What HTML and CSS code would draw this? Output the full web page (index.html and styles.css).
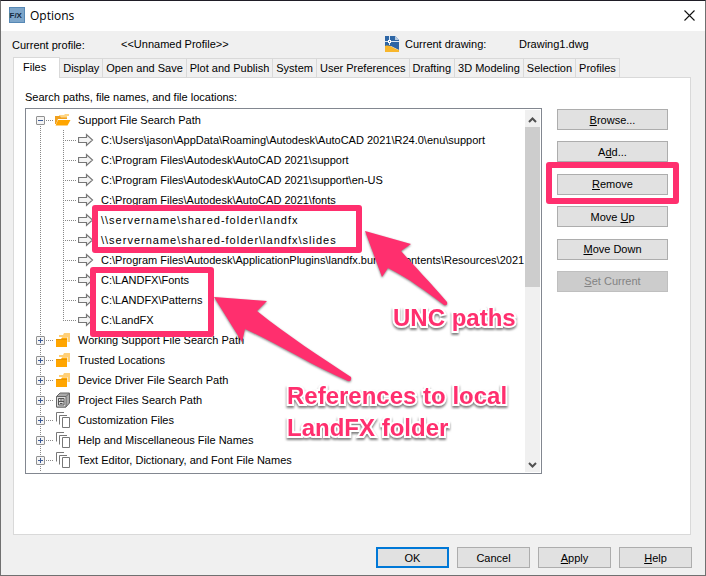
FILE: index.html
```
<!DOCTYPE html>
<html lang="en">
<head>
  <meta charset="UTF-8" />
  <meta name="viewport" content="width=device-width, initial-scale=1" />
  <title>Options</title>
  <link rel="stylesheet" href="styles.css">
</head>
<body>

  <!-- shared icons -->
  <svg class="sprite" aria-hidden="true">
    <symbol id="arrow" viewBox="0 0 16 14">
      <path d="M0.500 4.500H8.500V1.500L14.500 7L8.500 12.500V9.500H0.500Z" fill="#f4f4f4" stroke="#777" stroke-width="1.200"/>
    </symbol>
    <symbol id="folder-open" viewBox="0 0 16 14">
      <path d="M4 2H9L10 1H14V3H12V5H4Z" fill="#ffd684"/>
      <path d="M0 3H5L6 4.500H12V6H3L1 11H0Z" fill="#f0a01e"/>
      <path d="M3 7H15.500L12.500 12.500H0.500Z" fill="#ffa500"/>
    </symbol>
    <symbol id="folders" viewBox="0 0 16 16">
      <path d="M4 3H8L9 1H15V10H12.500V5H4Z" fill="#ffcf76"/>
      <path d="M1 7H6L7 5.500H12V15H1Z" fill="#ffa500"/>
      <path d="M1 7.500H12" stroke="#e59400" stroke-width="1"/>
    </symbol>
    <symbol id="cabinet" viewBox="0 0 16 16">
      <path d="M1.500 4.500L5 1H14.500V11L11 15H1.500Z" fill="#aaa" stroke="#666"/>
      <path d="M1.500 4.500H11V15H1.500ZM11 4.500L14.500 1" fill="#ddd" stroke="#666"/>
      <path d="M3.500 6.500H9V13H3.500ZM3.500 9.500H9M5 8H7.500M5 11.500H7.500" fill="none" stroke="#555"/>
    </symbol>
    <symbol id="files" viewBox="0 0 16 16">
      <path d="M1.500 9.500V0.500H9M4.500 12.500V3.500H12" fill="none" stroke="#777"/>
      <path d="M7.500 5.500H14.500V15.500H7.500Z" fill="#fff" stroke="#777"/>
    </symbol>
  </svg>

  <div class="dialog">
    <header class="titlebar">
      <svg class="app-icon" viewBox="0 0 16 16">
        <rect width="16" height="16" fill="#5688b5"/>
        <rect x="1" y="1" width="14" height="14" fill="#7da5c9"/>
        <text x="0.500" y="11" class="app-icon-text">F/X</text>
      </svg>
      <h1>Options</h1>
      <button class="close" aria-label="Close">
        <svg viewBox="0 0 11 11"><path d="M0.500 0.500L10.500 10.500M10.500 0.500L0.500 10.500" stroke="#111" stroke-width="1.100"/></svg>
      </button>
    </header>

    <div class="info">
      <span class="profile-label">Current profile:</span>
      <span class="profile">&lt;&lt;Unnamed Profile&gt;&gt;</span>
      <svg class="dwg-icon" viewBox="0 0 14 16">
        <path d="M0 0H10L14 4V14L6 10H0Z" fill="#2e66a5"/>
        <path d="M10 0V4H14Z" fill="#b5c9df"/>
        <path d="M0 10C5 8 9 13 14 14V16H0Z" fill="#f8b62c"/>
        <path d="M0 5.500H14M4.500 0V9" stroke="#dce8f4"/>
        <rect x="3.500" y="4.500" width="2" height="2" fill="#2e66a5" stroke="#fff"/>
      </svg>
      <span class="drawing-label">Current drawing:</span>
      <span>Drawing1.dwg</span>
    </div>

    <nav class="tabs" role="tablist">
      <button class="tab active" role="tab" aria-selected="true">Files</button>
      <button class="tab" role="tab">Display</button>
      <button class="tab" role="tab">Open and Save</button>
      <button class="tab" role="tab">Plot and Publish</button>
      <button class="tab" role="tab">System</button>
      <button class="tab" role="tab">User Preferences</button>
      <button class="tab" role="tab">Drafting</button>
      <button class="tab" role="tab">3D Modeling</button>
      <button class="tab" role="tab">Selection</button>
      <button class="tab" role="tab">Profiles</button>
    </nav>

    <main class="panel">
      <p class="caption">Search paths, file names, and file locations:</p>
      <div class="columns">
        <div class="tree-box">
          <ul class="tree">
            <li>
              <div class="row"><button class="toggle open" aria-label="Collapse"></button><svg class="icon"><use href="#folder-open"/></svg>Support File Search Path</div>
              <ul class="paths">
                <li><svg class="icon"><use href="#arrow"/></svg>C:\Users\jason\AppData\Roaming\Autodesk\AutoCAD 2021\R24.0\enu\support</li>
                <li><svg class="icon"><use href="#arrow"/></svg>C:\Program Files\Autodesk\AutoCAD 2021\support</li>
                <li><svg class="icon"><use href="#arrow"/></svg>C:\Program Files\Autodesk\AutoCAD 2021\support\en-US</li>
                <li><svg class="icon"><use href="#arrow"/></svg>C:\Program Files\Autodesk\AutoCAD 2021\fonts</li>
                <li class="unc"><svg class="icon"><use href="#arrow"/></svg>\\servername\shared-folder\landfx</li>
                <li class="unc"><svg class="icon"><use href="#arrow"/></svg>\\servername\shared-folder\landfx\slides</li>
                <li><svg class="icon"><use href="#arrow"/></svg>C:\Program Files\Autodesk\ApplicationPlugins\landfx.bundle\Contents\Resources\2021</li>
                <li><svg class="icon"><use href="#arrow"/></svg>C:\LANDFX\Fonts</li>
                <li><svg class="icon"><use href="#arrow"/></svg>C:\LANDFX\Patterns</li>
                <li><svg class="icon"><use href="#arrow"/></svg>C:\LandFX</li>
              </ul>
            </li>
            <li class="row"><button class="toggle" aria-label="Expand"></button><svg class="icon"><use href="#folders"/></svg>Working Support File Search Path</li>
            <li class="row"><button class="toggle" aria-label="Expand"></button><svg class="icon"><use href="#folders"/></svg>Trusted Locations</li>
            <li class="row"><button class="toggle" aria-label="Expand"></button><svg class="icon"><use href="#folders"/></svg>Device Driver File Search Path</li>
            <li class="row"><button class="toggle" aria-label="Expand"></button><svg class="icon"><use href="#cabinet"/></svg>Project Files Search Path</li>
            <li class="row"><button class="toggle" aria-label="Expand"></button><svg class="icon"><use href="#files"/></svg>Customization Files</li>
            <li class="row"><button class="toggle" aria-label="Expand"></button><svg class="icon"><use href="#files"/></svg>Help and Miscellaneous File Names</li>
            <li class="row"><button class="toggle" aria-label="Expand"></button><svg class="icon"><use href="#files"/></svg>Text Editor, Dictionary, and Font File Names</li>
          </ul>
          <div class="scrollbar">
            <button aria-label="Scroll up"><svg viewBox="0 0 9 6"><path d="M1 5L4.500 1.500L8 5" fill="none" stroke="#505050" stroke-width="2"/></svg></button>
            <div class="thumb"></div>
            <button class="down" aria-label="Scroll down"><svg viewBox="0 0 9 6"><path d="M1 1L4.500 4.500L8 1" fill="none" stroke="#505050" stroke-width="2"/></svg></button>
          </div>
        </div>
        <div class="actions">
          <button class="btn"><u>B</u>rowse...</button>
          <button class="btn">A<u>d</u>d...</button>
          <button class="btn"><u>R</u>emove</button>
          <button class="btn">Move <u>U</u>p</button>
          <button class="btn"><u>M</u>ove Down</button>
          <button class="btn" disabled><u>S</u>et Current</button>
        </div>
      </div>
    </main>

    <footer class="footer">
      <button class="btn primary">OK</button>
      <button class="btn">Cancel</button>
      <button class="btn"><u>A</u>pply</button>
      <button class="btn"><u>H</u>elp</button>
    </footer>

    <!-- callouts drawn over the dialog -->
    <div class="mark mark-unc"></div>
    <div class="mark mark-local"></div>
    <div class="mark mark-remove"></div>
    <svg class="pointers" viewBox="0 0 240 180">
      <path d="M152 11L198 24L188 31C203 48 217 62 234 82Q235 86 231 85C212 71 197 59 175 48L169 57Z"/>
      <path d="M1 77L54 81L44 91C75 116 108 137 138 157Q139 162 135 161C100 146 65 124 32 109L29 122Z"/>
    </svg>
    <p class="note note-unc">UNC paths</p>
    <p class="note note-local">References to local<br>LandFX folder</p>
  </div>

</body>
</html>
```
FILE: styles.css
```
* {
  box-sizing: border-box;
}

body {
  margin: 0;
  font-family: "Liberation Sans", Arial, sans-serif;
  font-size: 11px;
  line-height: 16px;
  color: #000;
}

ul {
  list-style: none;
  margin: 0;
  padding: 0;
}

p {
  margin: 0;
}

button {
  font: inherit;
  color: inherit;
  padding: 0;
}

.sprite {
  position: absolute;
  width: 0;
  height: 0;
}

.dialog {
  position: relative;
  min-height: 100vh;
  display: flex;
  flex-direction: column;
  background: #f0f0f0;
  border: 1px solid #707070;
  border-top-color: #1f1d26;
}

/* title bar */
.titlebar {
  display: flex;
  align-items: center;
  height: 30px;
  padding: 0 10px 2px 8px;
  background: #fff;
}

.app-icon {
  width: 16px;
  height: 16px;
}

.app-icon-text {
  font: bold 8px "Liberation Sans", sans-serif;
  fill: #14283c;
}

h1 {
  flex: 1;
  margin: 0 0 0 5px;
  padding-top: 2px;
  font: 12px/16px "Open Sans", sans-serif;
  color: #000;
}

.close {
  width: 11px;
  height: 11px;
  border: 0;
  background: none;
}

.close svg {
  display: block;
}

.info {
  display: flex;
  align-items: center;
  height: 26px;
  padding: 0 11px;
}

.profile-label {
  width: 109px;
  padding-top: 2px;
}

.profile {
  width: 264px;
}

.dwg-icon {
  width: 14px;
  height: 16px;
  margin-right: 6px;
}

.drawing-label {
  width: 114px;
}

/* tabs */
.tabs {
  display: flex;
  align-items: flex-end;
  padding: 0 12px;
}

.tab {
  height: 19px;
  padding: 0 3px;
  border: 1px solid #d9d9d9;
  border-width: 1px 1px 0 0;
  background: #f0f0f0;
}

.tab.active {
  height: 21px;
  padding: 0 13px 3px 9px;
  border-left-width: 1px;
  background: #fff;
  margin-bottom: -1px;
  z-index: 1;
}

.panel {
  flex: 1;
  margin: 0 14px 0 12px;
  padding: 11px 22px 0 11px;
  border: 1px solid #d9d9d9;
  background: #fff;
}

.caption {
  padding-bottom: 3px;
}

.columns {
  display: flex;
  align-items: flex-start;
  gap: 15px;
}

/* tree */
.tree-box {
  flex: 1;
  display: flex;
  min-width: 0;
  border: 1px solid #828790;
  padding: 1px;
}

.tree {
  flex: 1;
  min-width: 0;
  padding: 0 0 2px 9px;
  overflow: hidden;
  white-space: nowrap;
  background: repeating-linear-gradient(#888 0 1px, transparent 1px 2px) 13px 14px / 1px 100% no-repeat;
}

.row,
.paths li {
  display: flex;
  align-items: center;
  height: 20px;
}

.icon {
  flex: none;
  width: 16px;
  height: 14px;
  margin-right: 7px;
}

.row .icon {
  height: 16px;
}

.toggle {
  width: 9px;
  height: 9px;
  border: 1px solid #919191;
  border-radius: 1px;
  background:
    linear-gradient(#3c5a96, #3c5a96) center / 5px 1px no-repeat,
    linear-gradient(#3c5a96, #3c5a96) center / 1px 5px no-repeat,
    #f4f4f4;
}

.toggle.open {
  background:
    linear-gradient(#3c5a96, #3c5a96) center / 5px 1px no-repeat,
    #f4f4f4;
}

.row .toggle + .icon {
  margin-left: 10px;
}

.row {
  background: repeating-linear-gradient(90deg, #888 0 1px, transparent 1px 2px) 10px 10px / 8px 1px no-repeat;
}

.paths {
  margin-left: 27px;
  background: repeating-linear-gradient(#888 0 1px, transparent 1px 2px) 0 0 / 1px 190px no-repeat;
}

.paths li {
  padding-left: 15px;
  background: repeating-linear-gradient(90deg, #888 0 1px, transparent 1px 2px) 0 10px / 13px 1px no-repeat;
}

.paths .unc {
  letter-spacing: 1px;
}

.scrollbar {
  display: flex;
  flex-direction: column;
  width: 15px;
  background: #f0f0f0;
}

.scrollbar button {
  height: 17px;
  border: 0;
  background: none;
}

.scrollbar svg {
  width: 9px;
  height: 6px;
}

.thumb {
  height: 160px;
  background: #cdcdcd;
}

.scrollbar .down {
  margin-top: auto;
}

/* buttons */
.btn {
  height: 21px;
  border: 1px solid #adadad;
  background: #e1e1e1;
}

.btn:disabled {
  background: #ccc;
  border-color: #bfbfbf;
  color: #838383;
}

.actions {
  width: 111px;
  height: 184px;
  padding-top: 1px;
  display: flex;
  flex-direction: column;
  justify-content: space-between;
}

.footer {
  display: flex;
  justify-content: flex-end;
  gap: 8px;
  padding: 12px 13px 7px;
}

.footer .btn {
  width: 73px;
}

.btn.primary {
  border: 2px solid #0078d7;
}

/* callouts */
.mark {
  position: absolute;
  border: 6px solid #ff2f6e;
  border-radius: 3px;
}

.mark-unc {
  left: 91px;
  top: 204px;
  width: 270px;
  height: 48px;
}

.mark-local {
  left: 89px;
  top: 266px;
  width: 124px;
  height: 70px;
}

.mark-remove {
  left: 545px;
  top: 161px;
  width: 133px;
  height: 42px;
}

.pointers {
  position: absolute;
  left: 212px;
  top: 219px;
  width: 240px;
  height: 180px;
  fill: #ff2f6e;
  filter: drop-shadow(0 1px 1px rgba(0, 0, 0, 0.5));
}

.note {
  position: absolute;
  font: bold 24px/32px "Liberation Sans", sans-serif;
  color: #ff2f6e;
  white-space: nowrap;
  -webkit-text-stroke: 4px #fff;
  paint-order: stroke fill;
  filter: drop-shadow(0 2px 1px rgba(0, 0, 0, 0.5));
}

.note-unc {
  left: 392px;
  top: 301px;
}

.note-local {
  left: 286px;
  top: 379px;
}
```
